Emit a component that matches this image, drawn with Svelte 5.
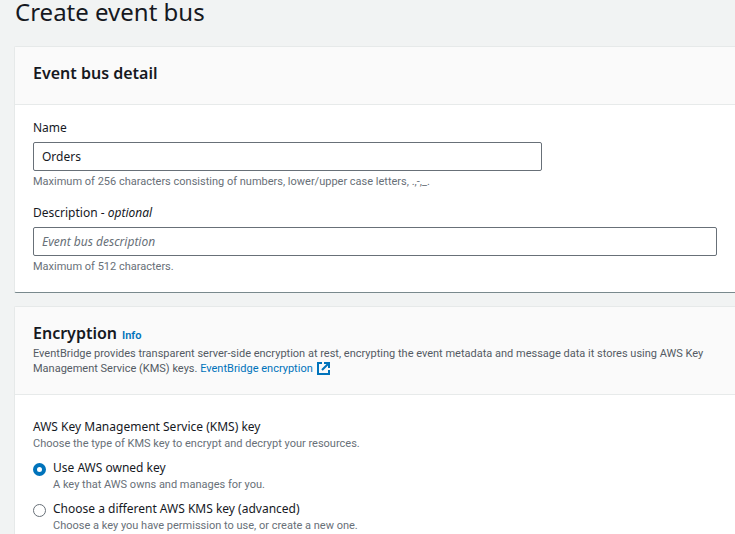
<script>
  let name = $state('Orders');
  let description = $state('');
  let keyType = $state('owned');

  const keyOptions = [
    {
      value: 'owned',
      label: 'Use AWS owned key',
      hint: 'A key that AWS owns and manages for you.'
    },
    {
      value: 'custom',
      label: 'Choose a different AWS KMS key (advanced)',
      hint: 'Choose a key you have permission to use, or create a new one.'
    }
  ];
</script>

<main>
  <h1>Create event bus</h1>

  <section class="card">
    <header>
      <h2>Event bus detail</h2>
    </header>
    <div class="body fields">
      <div class="field">
        <label for="bus-name">Name</label>
        <input id="bus-name" class="text narrow" type="text" bind:value={name} aria-describedby="name-hint" />
        <p id="name-hint" class="hint">
          Maximum of 256 characters consisting of numbers, lower/upper case letters, .,-,_.
        </p>
      </div>
      <div class="field">
        <label for="bus-description">Description - <em>optional</em></label>
        <input
          id="bus-description"
          class="text"
          type="text"
          placeholder="Event bus description"
          bind:value={description}
          aria-describedby="description-hint"
        />
        <p id="description-hint" class="hint">Maximum of 512 characters.</p>
      </div>
    </div>
  </section>

  <section class="card">
    <header class="described">
      <div class="title">
        <h2>Encryption</h2>
        <a class="info" href="#info">Info</a>
      </div>
      <p class="summary">
        EventBridge provides transparent server-side encryption at rest, encrypting the event metadata and message data it
        stores using AWS Key Management Service (KMS) keys.
        <a href="#encryption">EventBridge encryption<svg viewBox="0 0 13 13" aria-hidden="true">
            <path d="M5 1H1v11h11V8" />
            <path d="M7 1h5v5M12 1L5 8" />
          </svg></a>
      </p>
    </header>
    <fieldset class="body keys">
      <legend>AWS Key Management Service (KMS) key</legend>
      <p class="hint">Choose the type of KMS key to encrypt and decrypt your resources.</p>
      {#each keyOptions as option (option.value)}
        <div class="option">
          <input
            id="key-{option.value}"
            type="radio"
            name="key-type"
            value={option.value}
            bind:group={keyType}
            aria-describedby="hint-{option.value}"
          />
          <div>
            <label for="key-{option.value}">{option.label}</label>
            <p id="hint-{option.value}" class="hint">{option.hint}</p>
          </div>
        </div>
      {/each}
    </fieldset>
  </section>
</main>

<style>
  :global(body) {
    background: #f1f3f3;
  }

  main {
    display: flex;
    flex-direction: column;
    padding-left: 14px;
    font-family: 'Noto Sans', 'Open Sans', sans-serif;
    font-size: 12px;
    line-height: 18px;
    color: #16191f;
  }

  h1,
  h2,
  p {
    margin: 0;
  }

  h1 {
    padding: 0 1px 22px;
    font-size: 24px;
    font-weight: 400;
    line-height: 24px;
  }

  h2 {
    font-size: 16px;
    font-weight: 600;
    line-height: 20px;
  }

  .card {
    margin-bottom: 13px;
    background: #fff;
    border: 1px solid #e6e9e9;
    border-right: 0;
    border-bottom-color: #79898d;
    border-radius: 2px 0 0 2px;
  }

  header {
    padding: 16px 18px 21px;
    background: #fafafa;
    border-bottom: 1px solid #e7eaea;
  }

  .described {
    padding-bottom: 18px;
  }

  .body {
    padding: 14px 18px 18px;
  }

  .fields {
    display: flex;
    flex-direction: column;
    gap: 15px;
  }

  .field {
    display: flex;
    flex-direction: column;
    align-items: flex-start;
  }

  .text {
    box-sizing: border-box;
    width: 100%;
    height: 29px;
    margin: 5px 0 3px;
    padding: 0 8px;
    font: inherit;
    color: inherit;
    background: #fff;
    border: 1px solid #687078;
    border-radius: 2px;
  }

  .narrow {
    width: calc(75% - 4px);
  }

  .text::placeholder {
    font-style: italic;
    color: #687078;
    opacity: 1;
  }

  .hint,
  .summary,
  .info {
    font-family: Roboto, 'Noto Sans', sans-serif;
    font-size: 11px;
    line-height: 15px;
  }

  .hint {
    color: #687078;
  }

  .summary {
    padding-top: 3px;
    color: #545b64;
  }

  .info {
    font-weight: 600;
  }

  .title {
    display: flex;
    align-items: baseline;
    gap: 5px;
  }

  a {
    color: #0073bb;
    text-decoration: none;
  }

  svg {
    width: 13px;
    height: 13px;
    margin-left: 4px;
    vertical-align: -3px;
    fill: none;
    stroke: #0073bb;
    stroke-width: 2;
  }

  fieldset {
    margin: 0;
    border: 0;
  }

  .keys {
    padding-top: 23px;
  }

  legend {
    float: left;
    width: 100%;
    padding: 0;
  }

  legend + .hint {
    clear: both;
  }

  .option {
    display: flex;
    gap: 7px;
    padding-top: 8px;
  }

  .option label {
    display: block;
  }

  .option input {
    flex: none;
    box-sizing: border-box;
    width: 13px;
    height: 13px;
    margin: 4px 0 0;
    appearance: none;
    background: #fff;
    border: 1px solid #687078;
    border-radius: 50%;
  }

  .option input:checked {
    border: 4px solid #0073bb;
  }
</style>
